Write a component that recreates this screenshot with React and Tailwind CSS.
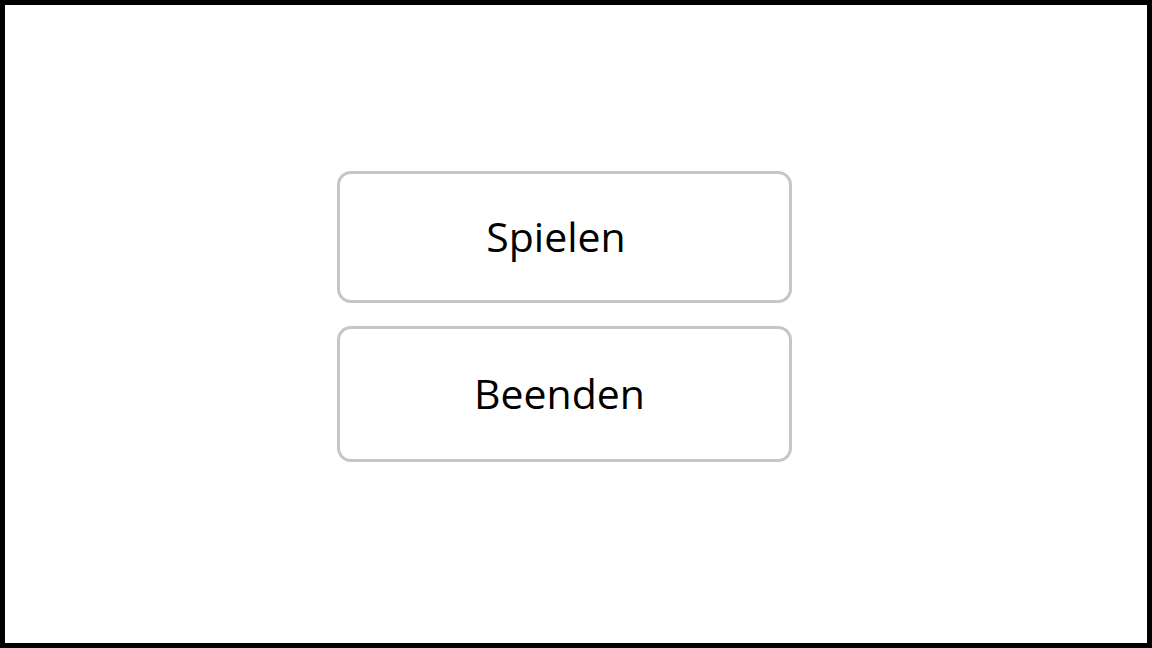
export default function App() {
  return (
    <div
      className="h-screen w-full bg-white border-[5px] border-black flex flex-col items-start pl-[332px] pt-[166px] gap-[23px]"
      style={{ fontFamily: '"Open Sans", "Noto Sans", sans-serif' }}
    >
      {/* Menu buttons */}
      <button className="w-[455px] h-[132px] rounded-[14px] border-[3px] border-[#c6c6c6] bg-white flex items-center justify-center pr-[17px] text-[41px] text-black">
        Spielen
      </button>
      <button className="w-[455px] h-[136px] rounded-[14px] border-[3px] border-[#c6c6c6] bg-white flex items-center justify-center pr-[10px] text-[41px] text-black">
        Beenden
      </button>
    </div>
  )
}
